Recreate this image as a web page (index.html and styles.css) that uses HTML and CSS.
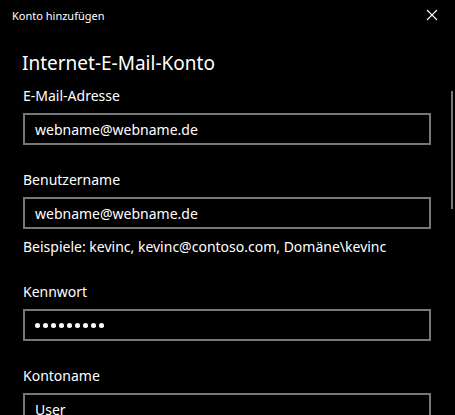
FILE: index.html
```html
<!DOCTYPE html>
<html lang="de">
<head>
    <meta charset="UTF-8">
    <meta name="viewport" content="width=device-width, initial-scale=1.0">
    <title>Konto hinzufügen</title>
    <link rel="stylesheet" href="styles.css">
</head>
<body>
    <div class="titlebar">
        <span class="titlebar-text">Konto hinzufügen</span>
        <svg class="close" width="12" height="12" viewBox="0 0 12 12">
            <path d="M1 1 L11 11 M11 1 L1 11" stroke="#fff" stroke-width="1.1" fill="none"/>
        </svg>
    </div>

    <div class="content">
        <div class="scrollbar"></div>
        <h1 class="heading">Internet-E-Mail-Konto</h1>

        <div class="field">
            <div class="label">E-Mail-Adresse</div>
            <div class="box">webname@webname.de</div>
        </div>

        <div class="field">
            <div class="label">Benutzername</div>
            <div class="box">webname@webname.de</div>
            <div class="hint">Beispiele: kevinc, kevinc@contoso.com, Domäne\kevinc</div>
        </div>

        <div class="field">
            <div class="label">Kennwort</div>
            <div class="box">
                <span class="dots">
                    <i></i><i></i><i></i><i></i><i></i><i></i><i></i><i></i><i></i>
                </span>
            </div>
        </div>

        <div class="field">
            <div class="label">Kontoname</div>
            <div class="box">User</div>
        </div>
    </div>
</body>
</html>
```

FILE: styles.css
```css
* {
  margin: 0;
  padding: 0;
  box-sizing: border-box;
}

body {
  background: #000;
  color: #fff;
  font-family: 'Noto Sans', sans-serif;
  width: 455px;
  height: 415px;
  overflow: hidden;
}

.titlebar {
  height: 30px;
  display: flex;
  align-items: center;
  justify-content: space-between;
  padding: 0 17px 0 12px;
}

.titlebar-text {
  font-size: 11px;
  color: #fff;
}

.close {
  display: block;
}

.content {
  position: relative;
  padding: 19px 24px 0 23px;
  display: flex;
  flex-direction: column;
  gap: 25px;
}

.scrollbar {
  position: absolute;
  left: 451px;
  top: 61px;
  width: 2px;
  height: 118px;
  background: #7a7a7a;
}

.heading {
  font-size: 19px;
  font-weight: normal;
  line-height: 28px;
  margin-left: -1px;
  margin-bottom: -16px;
}

.label {
  font-size: 14px;
  line-height: 20px;
  margin-bottom: 7px;
}

.box {
  height: 32px;
  border: 2px solid #777;
  padding: 0 10px;
  display: flex;
  align-items: center;
  font-size: 14px;
  color: #fff;
}

.hint {
  font-size: 14px;
  line-height: 20px;
  margin-top: 8px;
}

.dots {
  display: flex;
  gap: 3px;
}

.dots i {
  display: block;
  width: 5px;
  height: 5px;
  border-radius: 50%;
  background: #fff;
}
```
